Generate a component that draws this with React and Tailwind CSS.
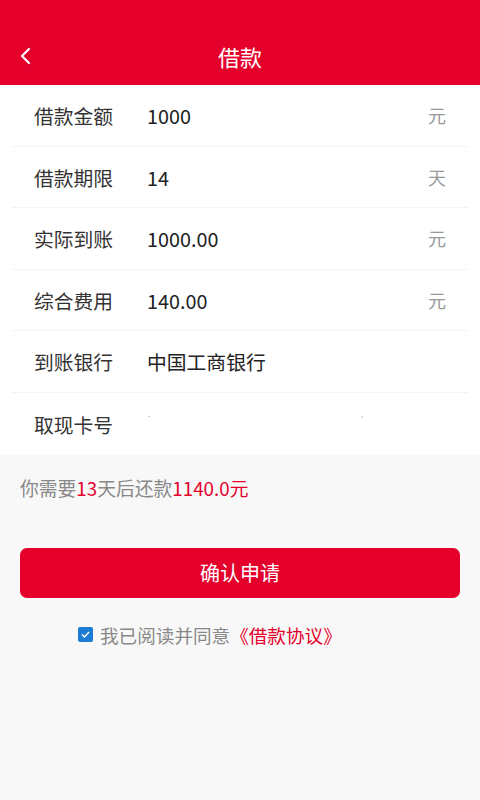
export default function App() {
  const font = { fontFamily: '"Noto Sans CJK SC", "Noto Sans", sans-serif' };
  const rows = [
    ["借款金额", "1000", "元"],
    ["借款期限", "14", "天"],
    ["实际到账", "1000.00", "元"],
    ["综合费用", "140.00", "元"],
    ["到账银行", "中国工商银行", ""],
  ];
  return (
    <div className="w-[480px] h-[800px] bg-[#f8f8f8] flex flex-col" style={font}>
      <div className="h-[85px] bg-[#e4002b] flex items-end shrink-0">
        <div className="relative w-full h-[57px] flex items-center justify-center">
          <svg className="absolute left-[18px] top-[18px]" width="14" height="20" viewBox="0 0 14 20">
            <path d="M11 3 L4 10 L11 17" fill="none" stroke="white" strokeWidth="2.2" strokeLinecap="round" strokeLinejoin="round" />
          </svg>
          <span className="text-white text-[22px] leading-none mb-[2px]">借款</span>
        </div>
      </div>
      <div className="bg-white px-[12px]">
        {rows.map(([l, v, u]) => (
          <div key={l} className="h-[61.6px] flex items-center border-b border-[#f4f4f4] pl-[22px] pr-[22px] pt-[1px]">
            <span className="w-[113px] text-[19.8px] text-[#333]">{l}</span>
            <span className="flex-1 text-[19.8px] text-[#222]">{v}</span>
            <span className="text-[18px] text-[#999]">{u}</span>
          </div>
        ))}
        <div className="h-[62px] flex items-center pl-[22px] pr-[22px] pt-[1px]">
          <span className="w-[113px] text-[19.8px] text-[#333]">取现卡号</span>
          <span className="flex-1 relative h-[10px]">
            <span className="absolute left-[1px] top-[-3px] w-[2px] h-[1px] bg-[#ccc]" />
            <span className="absolute left-[214px] top-[-3px] w-[2px] h-[2px] bg-[#ddd]" />
          </span>
        </div>
      </div>
      <div className="px-[20px] pt-[20px] text-[18.8px] text-[#888] leading-[26px]">
        你需要<span className="text-[#e4002b]">13</span>天后还款<span className="text-[#e4002b]">1140.0元</span>
      </div>
      <div className="px-[20px] mt-[47px]">
        <button className="w-full h-[50px] rounded-[7px] bg-[#e4002b] text-white text-[20px]">确认申请</button>
      </div>
      <div className="flex items-center mt-[23px] pl-[78px]">
        <span className="w-[15px] h-[15px] rounded-[2px] bg-[#1e7bd4] flex items-center justify-center mr-[7px]">
          <svg width="11" height="11" viewBox="0 0 11 11"><path d="M2 5.5 L4.5 8 L9 3" fill="none" stroke="white" strokeWidth="1.5" /></svg>
        </span>
        <span className="text-[18.6px] text-[#888]">我已阅读并同意</span>
        <span className="text-[18.6px] text-[#e4002b]">《借款协议》</span>
      </div>
    </div>
  );
}
